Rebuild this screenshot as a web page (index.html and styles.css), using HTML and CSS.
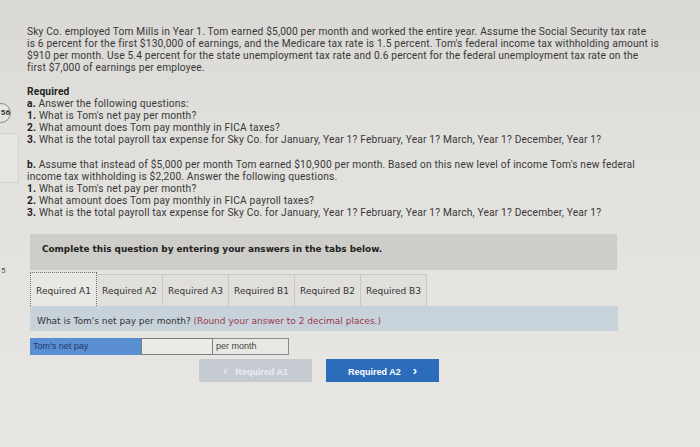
FILE: index.html
```html
<!DOCTYPE html>
<html>
<head>
<meta charset="utf-8">
<link rel="stylesheet" href="styles.css">
</head>
<body>
<div class="page">
  <div class="gutter">
    <div class="badge">56</div>
    <div class="side-box one"></div>
    <div class="side-mark">5</div>
  </div>
  <div class="main">
    <p class="intro">Sky Co. employed Tom Mills in Year 1. Tom earned $5,000 per month and worked the entire year. Assume the Social Security tax rate<br>is 6 percent for the first $130,000 of earnings, and the Medicare tax rate is 1.5 percent. Tom's federal income tax withholding amount is<br>$910 per month. Use 5.4 percent for the state unemployment tax rate and 0.6 percent for the federal unemployment tax rate on the<br>first $7,000 of earnings per employee.</p>
    <div class="req">
      <div class="req-title">Required</div>
      <div><b>a.</b> Answer the following questions:</div>
      <div><b>1.</b> What is Tom's net pay per month?</div>
      <div><b>2.</b> What amount does Tom pay monthly in FICA taxes?</div>
      <div><b>3.</b> What is the total payroll tax expense for Sky Co. for January, Year 1? February, Year 1? March, Year 1? December, Year 1?</div>
    </div>
    <div class="req partb">
      <div><b>b.</b> Assume that instead of $5,000 per month Tom earned $10,900 per month. Based on this new level of income Tom's new federal<br>income tax withholding is $2,200. Answer the following questions.</div>
      <div><b>1.</b> What is Tom's net pay per month?</div>
      <div><b>2.</b> What amount does Tom pay monthly in FICA payroll taxes?</div>
      <div><b>3.</b> What is the total payroll tax expense for Sky Co. for January, Year 1? February, Year 1? March, Year 1? December, Year 1?</div>
    </div>
    <div class="complete">Complete this question by entering your answers in the tabs below.</div>
    <div class="tabs">
      <div class="tab active">Required A1</div>
      <div class="tab">Required A2</div>
      <div class="tab">Required A3</div>
      <div class="tab">Required B1</div>
      <div class="tab">Required B2</div>
      <div class="tab">Required B3</div>
    </div>
    <div class="question">What is Tom's net pay per month? <span class="hint">(Round your answer to 2 decimal places.)</span></div>
    <div class="answer">
      <div class="label">Tom's net pay</div>
      <div class="input"></div>
      <div class="unit">per month</div>
    </div>
    <div class="nav">
      <div class="btn prev"><span class="chev">&lsaquo;</span>Required A1</div>
      <div class="btn next">Required A2<span class="chev after">&rsaquo;</span></div>
    </div>
  </div>
</div>
</body>
</html>
```
FILE: styles.css
```css
html, body {
  margin: 0;
  padding: 0;
  background: #e3e2de;
}
body {
  width: 700px;
  height: 447px;
  overflow: hidden;
  font-family: Roboto, "Liberation Sans", sans-serif;
  color: #383838;
}
.page {
  display: flex;
  height: 447px;
  background: linear-gradient(180deg, #d9d8d4 0%, #e1e0dc 30%, #e5e4e0 70%, #e8e7e3 100%);
}
.gutter {
  width: 27px;
  flex: none;
  position: relative;
}
.badge {
  position: absolute;
  left: -9px;
  top: 103px;
  width: 18px;
  height: 18px;
  border: 1px solid #8a8a8a;
  border-radius: 50%;
  font-size: 8px;
  font-weight: 700;
  line-height: 18px;
  text-align: right;
  color: #333;
  background: #e6e5e1;
}
.side-box {
  position: absolute;
  left: -2px;
  width: 19px;
  border: 1px solid #d3d2ce;
  background: #e6e5e1;
}
.side-box.one { top: 133px; height: 48px; }
.side-mark {
  position: absolute;
  left: 1px;
  top: 266px;
  font-size: 8px;
  color: #555;
}
.main {
  width: 660px;
  padding-top: 26px;
}
.intro, .req {
  font-size: 10.2px;
  line-height: 12px;
  letter-spacing: 0.18px;
  white-space: nowrap;
}
.intro { margin: 0; }
.req { margin-top: 12px; }
.req b { font-weight: 700; color: #222; }
.req-title { font-weight: 700; color: #222; }
.partb { margin-top: 12.7px; }
.complete {
  margin-top: 15.8px;
  margin-left: 3px;
  width: 587px;
  height: 35.5px;
  box-sizing: border-box;
  background: #cecdc9;
  font-family: "DejaVu Sans", Verdana, sans-serif;
  font-weight: 700;
  font-size: 8.9px;
  line-height: 11px;
  padding: 10px 0 0 12px;
  color: #222;
}
.tabs {
  display: flex;
  margin-left: 3px;
  margin-top: 4.5px;
  height: 32px;
}
.tab {
  font-family: "DejaVu Sans", Verdana, sans-serif;
  font-size: 9px;
  line-height: 11px;
  color: #333;
  width: 66px;
  box-sizing: border-box;
  border: 1px solid #cac9c5;
  border-bottom: none;
  border-left: none;
  background: #e0dfdb;
  padding-top: 11px;
  text-align: center;
}
.tab.active {
  border: 1px dotted #6f6f6f;
  border-bottom: none;
  background: #e9e8e4;
  width: 67px;
  margin-top: -2px;
  padding-top: 13px;
}
.question {
  margin-left: 3px;
  width: 588px;
  height: 25px;
  box-sizing: border-box;
  background: #c8d2da;
  font-family: "DejaVu Sans", Verdana, sans-serif;
  font-size: 9px;
  line-height: 11px;
  padding: 10px 0 0 7px;
  color: #333;
}
.hint { color: #9b3b4c; }
.answer {
  display: flex;
  margin-left: 3px;
  margin-top: 7px;
  height: 16.5px;
  font-size: 9px;
  line-height: 11px;
  font-family: "Liberation Sans", Arial, sans-serif;
}
.label {
  width: 111px;
  background: #5b8fd3;
  color: #24386a;
  padding: 3px 0 0 3px;
  box-sizing: border-box;
}
.input {
  width: 72px;
  background: #ecebe8;
  border: 1px solid #7d7d7d;
  box-sizing: border-box;
}
.unit {
  width: 76px;
  border: 1px solid #8b8b8b;
  border-left: none;
  box-sizing: border-box;
  padding: 2px 0 0 3px;
  color: #444;
  background: #e9e8e4;
}
.nav {
  display: flex;
  gap: 14px;
  margin-left: 172px;
  margin-top: 4.5px;
}
.btn {
  width: 113px;
  height: 23px;
  line-height: 23px;
  text-align: center;
  font-family: "Liberation Sans", Arial, sans-serif;
  font-weight: 700;
  font-size: 9px;
  color: #fff;
}
.chev {
  font-size: 13px;
  font-weight: 400;
  margin-right: 8px;
}
.chev.after {
  margin-right: 0;
  margin-left: 12px;
  font-weight: 700;
}
.prev {
  background: #c6cbd2;
  color: #e9ecf1;
}
.next {
  background: #2b6cbb;
}
```
